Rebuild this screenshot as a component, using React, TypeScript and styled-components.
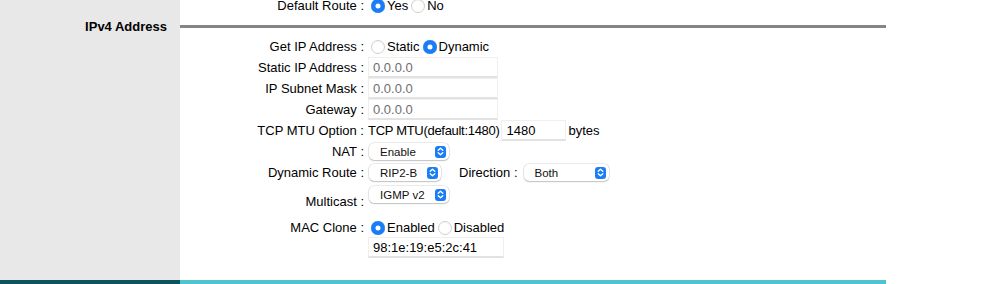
import React from "react";
import styled, { createGlobalStyle } from "styled-components";

const Global = createGlobalStyle`
  html, body { margin: 0; padding: 0; background: #fff; }
  body { font-family: "Liberation Sans", Arial, Helvetica, sans-serif; font-size: 13px; color: #000; }
`;

const Frame = styled.div`
  width: 886px;
  height: 284px;
  overflow: hidden;
  display: flex;
  flex-direction: column;
`;

const Body = styled.div`
  flex: 1;
  min-height: 0;
  display: grid;
  grid-template-columns: 180px 706px;
`;

const Side = styled.aside`
  background: #e8e8e8;
  padding-top: 16px;
`;

const SectionTitle = styled.h2`
  margin: 0;
  padding-right: 13px;
  text-align: right;
  font-size: 13px;
  line-height: 21px;
  font-weight: bold;
`;

const Main = styled.main`
  margin-top: -5px;
  display: flex;
  flex-direction: column;
`;

const Divider = styled.div`
  height: 20px;
  display: flex;
  align-items: center;
  &::after {
    content: "";
    flex: 1;
    height: 3px;
    background: #858585;
  }
`;

const Row = styled.div<{ $h?: number }>`
  height: ${(p) => p.$h ?? 21}px;
  display: grid;
  grid-template-columns: 184px 1fr;
  column-gap: 4px;
  align-items: center;
`;

const TallRow = styled(Row)`
  align-items: start;
  & > :first-child { padding-top: 8px; }
`;

const Label = styled.label`
  text-align: right;
  white-space: nowrap;
  line-height: 21px;
`;

const Value = styled.div<{ $gap?: number; $top?: number }>`
  display: flex;
  align-items: center;
  gap: ${(p) => p.$gap ?? 0}px;
  white-space: nowrap;
  height: ${(p) => (p.$top !== undefined ? "auto" : "100%")};
  padding-top: ${(p) => p.$top ?? 0}px;
`;

const Radio = styled.input.attrs({ type: "radio" })`
  appearance: none;
  width: 14px;
  height: 14px;
  margin: 0 2px 0 3px;
  border-radius: 50%;
  background: #fff;
  border: 1px solid #d0d0d0;
  box-sizing: border-box;
  box-shadow: inset 0 1px 1px rgba(0, 0, 0, 0.04);
  &:checked {
    border: none;
    background: #1a7df6;
    box-shadow: inset 0 0 0 4.5px #1a7df6, inset 0 0 0 7px #fff;
  }
`;

const Option = styled.span`
  display: inline-flex;
  align-items: center;
`;

const TextField = styled.input<{ $w: number }>`
  width: ${(p) => p.$w}px;
  height: 21px;
  box-sizing: border-box;
  margin: 0;
  padding: 0 0 0 4px;
  border: 1px solid #efefef;
  border-bottom: 2px solid #e2e2e2;
  background: #fff;
  font-family: inherit;
  font-size: 13px;
  color: #000;
  outline: none;
  &:disabled { color: #6e6e6e; }
`;

const SelectBox = styled.div<{ $w: number }>`
  width: ${(p) => p.$w}px;
  height: 17px;
  box-sizing: border-box;
  display: flex;
  align-items: center;
  justify-content: space-between;
  padding: 0 3px 0 11px;
  margin-left: 1px;
  border-radius: 5px;
  background: #fff;
  box-shadow: 0 0 0 0.5px rgba(0, 0, 0, 0.16), 0 1px 1.5px rgba(0, 0, 0, 0.18);
  font-size: 11.5px;
  color: #111;
`;

const Stepper = styled.span`
  width: 11px;
  height: 12px;
  border-radius: 3px;
  background: #1a7df6;
  display: flex;
  align-items: center;
  justify-content: center;
`;

const Spaced = styled.span<{ $l?: number; $r?: number }>`
  margin-left: ${(p) => p.$l ?? 0}px;
  margin-right: ${(p) => p.$r ?? 0}px;
`;

const Condensed = styled.span`
  letter-spacing: -0.3px;
`;

const Footer = styled.div`
  height: 4px;
  display: grid;
  grid-template-columns: 180px 706px;
  & > :first-child { background: #0d5360; }
  & > :last-child { background: #4ec4cf; }
`;

const Select = ({ value, width }: { value: string; width: number }) => (
  <SelectBox $w={width}>
    <span>{value}</span>
    <Stepper>
      <svg width="7" height="9" viewBox="0 0 7 9" fill="none" stroke="#fff" strokeWidth="1.3" strokeLinecap="round" strokeLinejoin="round">
        <path d="M1.2 3.3 3.5 1.2 5.8 3.3" />
        <path d="M1.2 5.7 3.5 7.8 5.8 5.7" />
      </svg>
    </Stepper>
  </SelectBox>
);

export default function App() {
  return (
    <Frame>
      <Global />
      <Body>
        <Side>
          <SectionTitle>IPv4 Address</SectionTitle>
        </Side>
        <Main>
          <Row>
            <Label>Default Route :</Label>
            <Value>
              <Option><Radio name="route" defaultChecked />Yes</Option>
              <Option><Radio name="route" />No</Option>
            </Value>
          </Row>
          <Divider />
          <Row>
            <Label>Get IP Address :</Label>
            <Value>
              <Option><Radio name="ip" />Static</Option>
              <Option><Radio name="ip" defaultChecked />Dynamic</Option>
            </Value>
          </Row>
          <Row>
            <Label>Static IP Address :</Label>
            <Value><TextField $w={130} defaultValue="0.0.0.0" disabled /></Value>
          </Row>
          <Row>
            <Label>IP Subnet Mask :</Label>
            <Value><TextField $w={130} defaultValue="0.0.0.0" disabled /></Value>
          </Row>
          <Row>
            <Label>Gateway :</Label>
            <Value><TextField $w={130} defaultValue="0.0.0.0" disabled /></Value>
          </Row>
          <Row>
            <Label>TCP MTU Option :</Label>
            <Value $gap={2}>
              <Condensed>TCP MTU(default:1480)</Condensed>
              <TextField $w={65} defaultValue="1480" />
              <span>bytes</span>
            </Value>
          </Row>
          <Row>
            <Label>NAT :</Label>
            <Value><Select value="Enable" width={80} /></Value>
          </Row>
          <Row>
            <Label>Dynamic Route :</Label>
            <Value>
              <Select value="RIP2-B" width={72} />
              <Spaced $l={18} $r={5}>Direction :</Spaced>
              <Select value="Both" width={85} />
            </Value>
          </Row>
          <TallRow $h={34}>
            <Label>Multicast :</Label>
            <Value $top={3}>
              <Select value="IGMP v2" width={80} />
            </Value>
          </TallRow>
          <Row $h={20}>
            <Label>MAC Clone :</Label>
            <Value>
              <Option><Radio name="mac" defaultChecked />Enabled</Option>
              <Option><Radio name="mac" />Disabled</Option>
            </Value>
          </Row>
          <Row>
            <span />
            <Value><TextField $w={136} defaultValue="98:1e:19:e5:2c:41" /></Value>
          </Row>
        </Main>
      </Body>
      <Footer>
        <span />
        <span />
      </Footer>
    </Frame>
  );
}
